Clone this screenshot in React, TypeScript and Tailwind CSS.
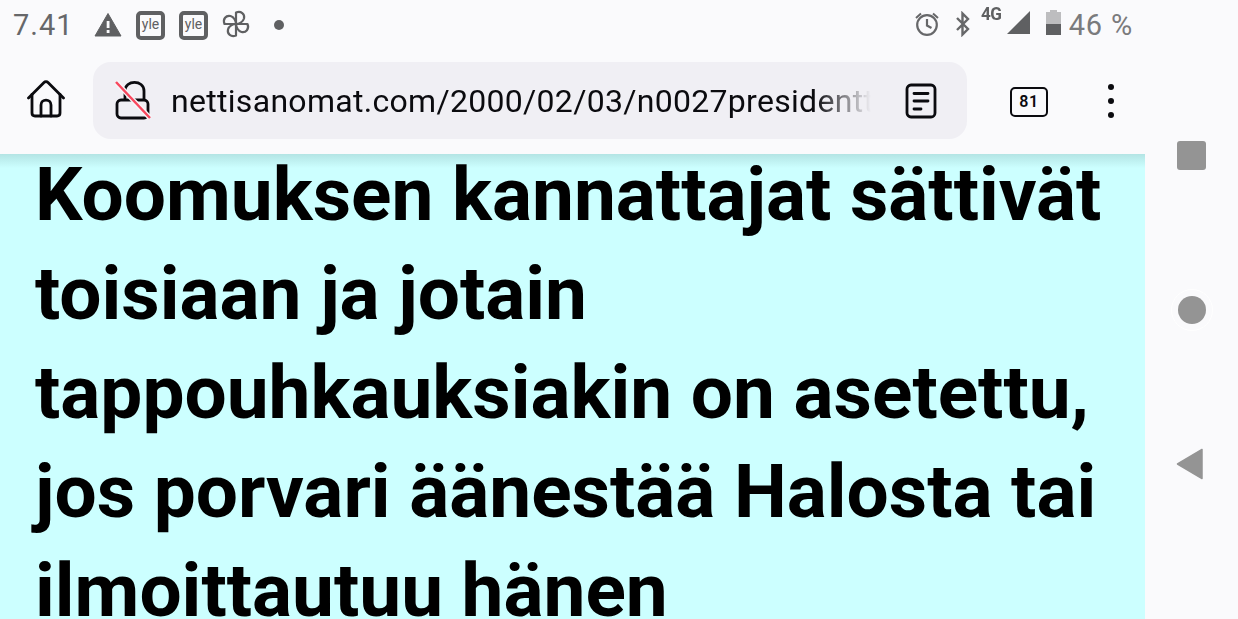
const roboto = "font-['Roboto',sans-serif]";

function YleIcon() {
  return (
    <div className="w-[29px] h-[29px] rounded-[5px] border-[4px] border-[#5f6062] bg-[#fafafc] flex items-center justify-center">
      <span className="text-[14px] leading-none text-[#5f6062] pb-[3px]">yle</span>
    </div>
  );
}

function StatusBar() {
  return (
    <div className="h-[50px] flex items-center text-[#5f6062]">
      <span className="ml-[13px] w-[80px] text-[29px] leading-none tracking-[1px] text-[#666769]">7.41</span>
      <svg width="28" height="26" viewBox="0 0 28 26" className="ml-[1px]">
        <path d="M14 1.5 L27 24 H1 Z" fill="#5f6062" stroke="#5f6062" strokeLinejoin="round" />
        <rect x="12.7" y="9" width="2.8" height="7" fill="#fafafc" />
        <rect x="12.7" y="18" width="2.8" height="3" fill="#fafafc" />
      </svg>
      <div className="ml-[14px]"><YleIcon /></div>
      <div className="ml-[14px]"><YleIcon /></div>
      <svg width="30" height="30" viewBox="0 0 30 30" fill="none" stroke="#5f6062" strokeWidth="2.200" strokeLinejoin="round" className="ml-[13px] mb-[2px]">
        {[0, 90, 180, 270].map((a) => (
          <path key={a} transform={`rotate(${a} 15 15)`} d="M15 15 V3.500 C20 1.500 24 5 23 9.500 C22 13 18 15 15 15 Z" />
        ))}
      </svg>
      <div className="ml-[23px] w-[10px] h-[10px] rounded-full bg-[#5f6062]" />

      <svg width="26" height="26" viewBox="0 0 26 26" fill="none" stroke="#666769" strokeWidth="2.200" className="ml-auto mr-[14px] mb-[2px]">
        <circle cx="13" cy="14" r="9.800" />
        <path d="M13 8 V14.500 L17.500 17" />
        <path d="M2 7 L7 2.500 M24 7 L19 2.500" strokeWidth="2" />
      </svg>
      <svg width="18" height="26" viewBox="0 0 18 26" fill="none" stroke="#666769" strokeWidth="2.400" className="mr-[9px] mb-[2px]">
        <path d="M3 7 L14 18 L8.500 23.500 V2.500 L14 8 L3 19" />
      </svg>
      <span className="self-start mt-[4px] text-[19px] leading-none font-bold text-[#5f6062] w-[24px] tracking-[-0.5px] scale-x-90 origin-left">4G</span>
      <svg width="24" height="24" viewBox="0 0 24 24" className="ml-[2px] mr-[15px] mb-[6px]">
        <path d="M23 1 V24 H0 Z" fill="#5f6062" />
      </svg>
      <div className="w-[15px] h-[25px] mr-[8px] mb-[5px] flex flex-col items-center">
        <div className="w-[7px] h-[2px] bg-[#bdbdbf]" />
        <div className="w-[15px] h-[12px] bg-[#bdbdbf]" />
        <div className="w-[15px] h-[11px] bg-[#5f6062]" />
      </div>
      <span className="mr-[12px] text-[29px] leading-none text-[#7a7b7d] tracking-[0.8px]">46 %</span>
    </div>
  );
}

function ToolBar() {
  return (
    <div className="h-[104px] flex items-start pt-[12px]">
      <svg width="38" height="38" viewBox="0 0 38 38" fill="none" stroke="#0b0b0f" strokeWidth="2.800" strokeLinejoin="round" strokeLinecap="round" className="ml-[27px] mt-[18px]">
        <path d="M1.500 18 L17 2.500 C18 1.500 20 1.500 21 2.500 L36.500 18" />
        <path d="M5 14.500 V33 C5 35 6 36 8 36 H30 C32 36 33 35 33 33 V14.500" />
        <path d="M14 36 V25 C14 18.500 24 18.500 24 25 V36" />
      </svg>
      <div className="ml-[28px] w-[874px] h-[77px] rounded-[18px] bg-[#f0eff4] flex items-center relative">
        <svg width="38" height="40" viewBox="0 0 38 40" fill="none" className="absolute left-[22px] top-[18px]">
          <path d="M10 20 V11 C10 -0.500 29 -0.500 29 11 V20" stroke="#0b0b0f" strokeWidth="2.800" />
          <rect x="2" y="20" width="31" height="18" rx="4" fill="#f0eff4" stroke="#0b0b0f" strokeWidth="2.800" />
          <path d="M1 2 L35 38" stroke="#f7f7fa" strokeWidth="5" />
          <path d="M1 2 L35 38" stroke="#f8485e" strokeWidth="2.500" />
        </svg>
        <div className="ml-[78px] w-[700px] overflow-hidden whitespace-nowrap text-[32px] leading-[40px] text-[#0b0b0f] tracking-[0.3px] [mask-image:linear-gradient(to_right,black_92%,transparent_100%)]">
          nettisanomat.com/2000/02/03/n0027presidenttiehdokkaat
        </div>
        <svg width="32" height="36" viewBox="0 0 32 36" fill="none" stroke="#0b0b0f" strokeWidth="2.800" strokeLinecap="round" className="absolute left-[812px] top-[21px]">
          <rect x="2" y="2" width="28" height="32" rx="4" />
          <path d="M9 10.500 H23 M9 18 H23 M9 26 H16" />
        </svg>
      </div>
      <div className="ml-[43px] mt-[25px] w-[38px] h-[30px] rounded-[5px] border-[2.500px] border-[#0b0b0f] flex items-center justify-center">
        <span className="text-[16px] leading-none font-semibold text-[#0b0b0f] tracking-[0.5px]">81</span>
      </div>
      <div className="ml-[60px] mt-[22px] flex flex-col gap-[8px]">
        <div className="w-[6px] h-[6px] rounded-full bg-[#0b0b0f]" />
        <div className="w-[6px] h-[6px] rounded-full bg-[#0b0b0f]" />
        <div className="w-[6px] h-[6px] rounded-full bg-[#0b0b0f]" />
      </div>
    </div>
  );
}

function NavRail() {
  return (
    <div className="w-[93px] h-full bg-[#fafafc] flex flex-col items-center pt-[141px]">
      <div className="w-[29px] h-[29px] rounded-[3px] bg-[#949494]" />
      <div className="mt-[119px] w-[42px] h-[42px] rounded-full border-[1px] border-white flex items-center justify-center">
        <div className="w-[28px] h-[28px] rounded-full bg-[#949494]" />
      </div>
      <svg width="28" height="32" viewBox="0 0 28 32" className="mt-[117px] mr-[4px]">
        <path d="M26 1.500 V30.500 L1.500 16 Z" fill="#949494" stroke="#949494" strokeWidth="1.500" strokeLinejoin="round" />
      </svg>
    </div>
  );
}

export default function App() {
  return (
    <div className={`w-[1238px] h-[619px] overflow-hidden flex bg-[#fafafc] ${roboto}`}>
      <div className="w-[1145px] h-full flex flex-col shrink-0">
        <div className="h-[154px] shrink-0">
          <StatusBar />
          <ToolBar />
        </div>
        <div className="flex-1 bg-[#ccffff] relative overflow-hidden">
          <div className="absolute inset-x-0 top-0 h-[14px] bg-gradient-to-b from-[#b3e4e4] to-transparent" />
          <h1 className="relative pl-[35px] mt-[-9px] text-[74.8px] leading-[99px] font-bold text-black whitespace-nowrap">
            Koomuksen kannattajat sättivät<br />
            toisiaan ja jotain<br />
            tappouhkauksiakin on asetettu,<br />
            jos porvari äänestää Halosta tai<br />
            ilmoittautuu hänen
          </h1>
        </div>
      </div>
      <NavRail />
    </div>
  );
}
